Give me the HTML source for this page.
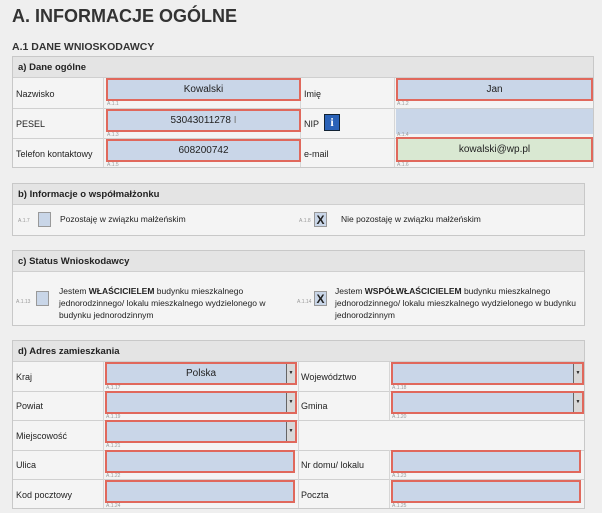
<!DOCTYPE html>
<html><head><meta charset="utf-8"><style>
body{margin:0;width:602px;height:513px;background:#efefef;font-family:"Liberation Sans",sans-serif;color:#222;position:relative;overflow:hidden}
.a{position:absolute}
.box{position:absolute;border:1px solid #c8c8c8;background:#f4f4f4;box-sizing:border-box}
.hd{position:absolute;background:#e4e4e4;font-size:9.5px;font-weight:bold;padding-left:5px;box-sizing:border-box;display:flex;align-items:center;border-bottom:1px solid #cfcfcf}
.lbl{position:absolute;font-size:9px;display:flex;align-items:center}
.in{position:absolute;background:#c9d6e8;border:2px solid #e0685c;box-sizing:border-box;font-size:10px;text-align:center;line-height:20px}
.hl{position:absolute;height:1px;background:#d0d0d0}
.vl{position:absolute;width:1px;background:#d6d6d6}
.cd{position:absolute;font-size:5px;color:#999}
.dd{position:absolute;right:0;top:0;width:8px;height:100%;background:#d8d8d8;border-left:1px solid #666;font-size:5px;line-height:19px;text-align:center}
.cb{position:absolute;width:13px;height:15px;background:#c9d6e8;border:1px solid #999;box-sizing:border-box;font-size:12px;font-weight:bold;text-align:center;line-height:14px}
.t{position:absolute;font-size:8.5px;line-height:12px}
</style></head><body>
<div class="a" style="left:12px;top:6px;font-size:18px;font-weight:bold;color:#333">A. INFORMACJE OGÓLNE</div>
<div class="a" style="left:12px;top:41px;font-size:10.5px;font-weight:bold;color:#333">A.1 DANE WNIOSKODAWCY</div>

<!-- a -->
<div class="box" style="left:12px;top:56px;width:582px;height:112px"></div>
<div class="hd" style="left:13px;top:57px;width:580px;height:21px">a) Dane ogólne</div>
<div class="hl" style="left:13px;top:108px;width:580px"></div>
<div class="hl" style="left:13px;top:138px;width:580px"></div>
<div class="vl" style="left:103px;top:78px;height:89px"></div>
<div class="vl" style="left:300px;top:78px;height:89px"></div>
<div class="vl" style="left:394px;top:78px;height:89px"></div>
<div class="lbl" style="left:16px;top:79px;height:29px">Nazwisko</div>
<div class="lbl" style="left:16px;top:109px;height:29px">PESEL</div>
<div class="lbl" style="left:16px;top:139px;height:29px">Telefon kontaktowy</div>
<div class="lbl" style="left:304px;top:79px;height:29px">Imię</div>
<div class="lbl" style="left:304px;top:109px;height:29px">NIP</div>
<div class="a" style="left:324px;top:114px;width:14px;height:15px;background:#2a62b8;border:1px solid #123;color:#fff;font-weight:bold;font-size:12px;text-align:center;line-height:15px;font-family:'Liberation Serif',serif">i</div>
<div class="lbl" style="left:304px;top:139px;height:29px">e-mail</div>
<div class="in" style="left:106px;top:78px;width:195px;height:23px">Kowalski</div>
<div class="in" style="left:106px;top:109px;width:195px;height:23px">53043011278 <span style="color:#777">I</span></div>
<div class="in" style="left:106px;top:139px;width:195px;height:23px">608200742</div>
<div class="in" style="left:396px;top:78px;width:197px;height:23px">Jan</div>
<div class="a" style="left:396px;top:109px;width:197px;height:25px;background:#c9d6e8"></div>
<div class="in" style="left:396px;top:137px;width:197px;height:25px;background:#d9e8d2;line-height:21px">kowalski@wp.pl</div>
<div class="cd" style="left:107px;top:101px">A.1.1</div><div class="cd" style="left:107px;top:132px">A.1.3</div><div class="cd" style="left:107px;top:162px">A.1.5</div>
<div class="cd" style="left:397px;top:101px">A.1.2</div><div class="cd" style="left:397px;top:132px">A.1.4</div><div class="cd" style="left:397px;top:162px">A.1.6</div>

<!-- b -->
<div class="box" style="left:12px;top:183px;width:573px;height:53px"></div>
<div class="hd" style="left:13px;top:184px;width:571px;height:21px">b) Informacje o współmałżonku</div>
<div class="cd" style="left:18px;top:218px">A.1.7</div>
<div class="cb" style="left:38px;top:212px"></div>
<div class="t" style="left:60px;top:213px">Pozostaję w związku małżeńskim</div>
<div class="cd" style="left:299px;top:218px">A.1.8</div>
<div class="cb" style="left:314px;top:212px">X</div>
<div class="t" style="left:341px;top:213px">Nie pozostaję w związku małżeńskim</div>

<!-- c -->
<div class="box" style="left:12px;top:250px;width:573px;height:76px"></div>
<div class="hd" style="left:13px;top:251px;width:571px;height:21px">c) Status Wnioskodawcy</div>
<div class="cd" style="left:16px;top:299px">A.1.13</div>
<div class="cb" style="left:36px;top:291px"></div>
<div class="t" style="left:59px;top:285px">Jestem <b>WŁAŚCICIELEM</b> budynku mieszkalnego<br>jednorodzinnego/ lokalu mieszkalnego wydzielonego w<br>budynku jednorodzinnym</div>
<div class="cd" style="left:297px;top:299px">A.1.14</div>
<div class="cb" style="left:314px;top:291px">X</div>
<div class="t" style="left:335px;top:285px">Jestem <b>WSPÓŁWŁAŚCICIELEM</b> budynku mieszkalnego<br>jednorodzinnego/ lokalu mieszkalnego wydzielonego w budynku<br>jednorodzinnym</div>

<!-- d -->
<div class="box" style="left:12px;top:340px;width:573px;height:169px"></div>
<div class="hd" style="left:13px;top:341px;width:571px;height:21px">d) Adres zamieszkania</div>
<div class="hl" style="left:13px;top:391px;width:571px"></div>
<div class="hl" style="left:13px;top:420px;width:571px"></div>
<div class="hl" style="left:13px;top:450px;width:571px"></div>
<div class="hl" style="left:13px;top:479px;width:571px"></div>
<div class="vl" style="left:103px;top:362px;height:146px"></div>
<div class="vl" style="left:298px;top:362px;height:146px"></div>
<div class="vl" style="left:389px;top:362px;height:58px"></div>
<div class="vl" style="left:389px;top:450px;height:58px"></div>
<div class="lbl" style="left:16px;top:363px;height:28px">Kraj</div>
<div class="lbl" style="left:16px;top:392px;height:28px">Powiat</div>
<div class="lbl" style="left:16px;top:421px;height:29px">Miejscowość</div>
<div class="lbl" style="left:16px;top:451px;height:28px">Ulica</div>
<div class="lbl" style="left:16px;top:480px;height:29px">Kod pocztowy</div>
<div class="lbl" style="left:301px;top:363px;height:28px">Województwo</div>
<div class="lbl" style="left:301px;top:392px;height:28px">Gmina</div>
<div class="lbl" style="left:301px;top:451px;height:28px">Nr domu/ lokalu</div>
<div class="lbl" style="left:301px;top:480px;height:29px">Poczta</div>
<div class="in" style="left:105px;top:362px;width:192px;height:23px">Polska<div class="dd">▼</div></div>
<div class="in" style="left:105px;top:391px;width:192px;height:23px"><div class="dd">▼</div></div>
<div class="in" style="left:105px;top:420px;width:192px;height:23px"><div class="dd">▼</div></div>
<div class="in" style="left:105px;top:450px;width:190px;height:23px"></div>
<div class="in" style="left:105px;top:480px;width:190px;height:23px"></div>
<div class="in" style="left:391px;top:362px;width:193px;height:23px"><div class="dd">▼</div></div>
<div class="in" style="left:391px;top:391px;width:193px;height:23px"><div class="dd">▼</div></div>
<div class="in" style="left:391px;top:450px;width:190px;height:23px"></div>
<div class="in" style="left:391px;top:480px;width:190px;height:23px"></div>
<div class="cd" style="left:106px;top:385px">A.1.17</div><div class="cd" style="left:106px;top:414px">A.1.19</div><div class="cd" style="left:106px;top:443px">A.1.21</div><div class="cd" style="left:106px;top:473px">A.1.22</div><div class="cd" style="left:106px;top:503px">A.1.24</div>
<div class="cd" style="left:392px;top:385px">A.1.18</div><div class="cd" style="left:392px;top:414px">A.1.20</div><div class="cd" style="left:392px;top:473px">A.1.23</div><div class="cd" style="left:392px;top:503px">A.1.25</div>
</body></html>
